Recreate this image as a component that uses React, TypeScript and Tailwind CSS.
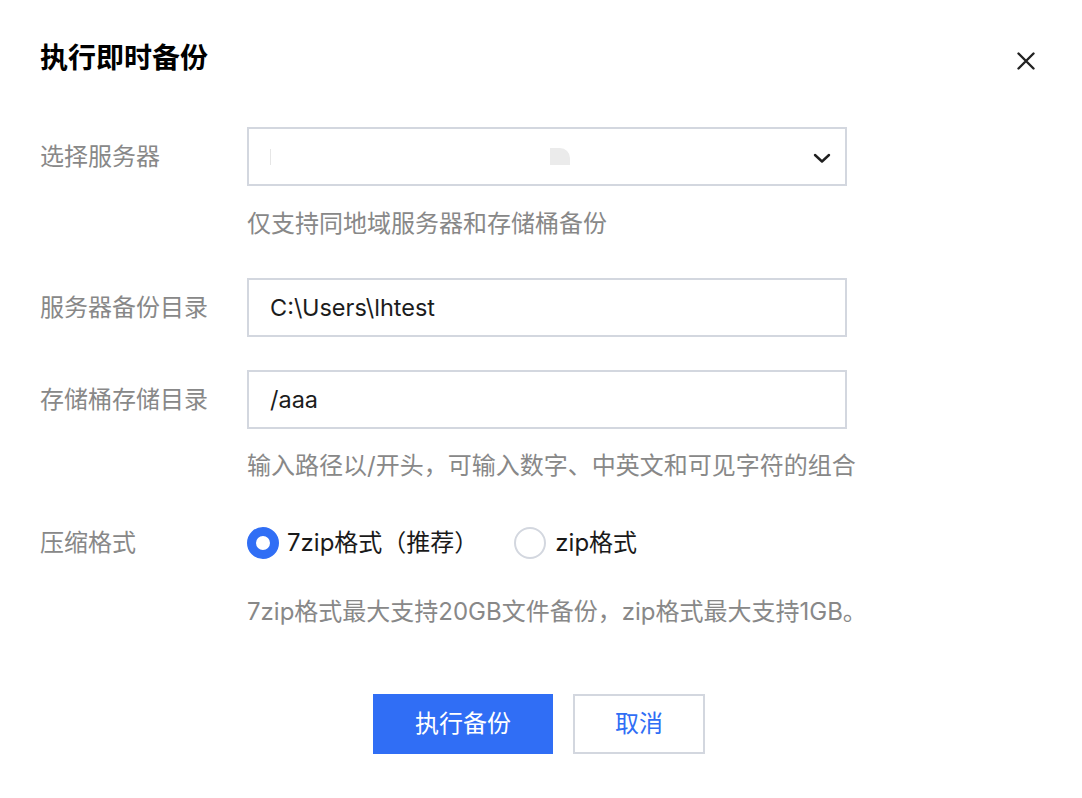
import React, { useState } from 'react';

const FONT = "font-['Inter','Noto_Sans_CJK_SC',sans-serif]";

function Field({ label, children }: { label: string; children: React.ReactNode }) {
  return (
    <div className="flex items-center">
      <div className="w-[207px] shrink-0 text-[24px] leading-[32px] text-[#888888]">{label}</div>
      <div className="w-[600px]">{children}</div>
    </div>
  );
}

function Hint({ children, className = '' }: { children: React.ReactNode; className?: string }) {
  return (
    <div className={`pl-[207px] text-[24px] leading-[32px] text-[#888888] ${className}`}>{children}</div>
  );
}

export default function App() {
  const [format, setFormat] = useState<'7zip' | 'zip'>('7zip');

  return (
    <div className={`w-[1082px] h-[798px] bg-white ${FONT}`}>
      {/* Header */}
      <div className="flex items-center justify-between pl-[40px] pr-[46px] pt-[39px] h-[77px]">
        <h2 className="text-[28px] leading-[38px] font-bold text-black">执行即时备份</h2>
        <button className="w-[20px] h-[20px] flex items-center justify-center mt-[6px] text-[#222]">
          <svg width="18" height="18" viewBox="0 0 18 18" fill="none">
            <path d="M1.5 1.5L16.5 16.5M16.5 1.5L1.5 16.5" stroke="currentColor" strokeWidth="2.4" strokeLinecap="round" />
          </svg>
        </button>
      </div>

      {/* Form */}
      <div className="pl-[40px] pt-[50px]">
        <Field label="选择服务器">
          <div className="h-[59px] border-2 border-[#d3d7df] flex items-center justify-between pl-[21px] pr-[14px]">
            <div className="flex items-center">
              <span className="w-px h-[16px] bg-[#e6e6e6]" />
              <span className="ml-[279px] w-[20px] h-[17px] bg-[#ebebeb] rounded-tr-[10px]" />
            </div>
            <svg width="18" height="12" viewBox="0 0 18 12" fill="none" className="mt-[2px]">
              <path d="M2 3L9 9.5L16 3" stroke="#1f1f1f" strokeWidth="2.4" strokeLinecap="round" strokeLinejoin="round" />
            </svg>
          </div>
        </Field>
        <Hint className="mt-[22px]">仅支持同地域服务器和存储桶备份</Hint>

        <div className="mt-[38px]">
          <Field label="服务器备份目录">
            <div className="h-[59px] border-2 border-[#d3d7df] flex items-center pl-[21px] text-[23.5px] text-[#1c1c1c]">
              C:\Users\lhtest
            </div>
          </Field>
        </div>

        <div className="mt-[33px]">
          <Field label="存储桶存储目录">
            <div className="h-[59px] border-2 border-[#d3d7df] flex items-center pl-[21px] text-[23.5px] text-[#1c1c1c]">
              /aaa
            </div>
          </Field>
        </div>
        <Hint className="mt-[21px]">输入路径以/开头，可输入数字、中英文和可见字符的组合</Hint>

        <div className="mt-[45px]">
          <Field label="压缩格式">
            <div className="flex items-center h-[32px] text-[24px] text-[#1a1a1a]">
              <label className="flex items-center cursor-pointer" onClick={() => setFormat('7zip')}>
                <span
                  className={`w-[32px] h-[32px] rounded-full box-border ${
                    format === '7zip' ? 'border-[9px] border-[#306ef5] bg-white' : 'border-2 border-[#d3d7df]'
                  }`}
                />
                <span className="ml-[8px]">7zip格式（推荐）</span>
              </label>
              <label className="flex items-center cursor-pointer ml-[36px]" onClick={() => setFormat('zip')}>
                <span
                  className={`w-[32px] h-[32px] rounded-full box-border ${
                    format === 'zip' ? 'border-[9px] border-[#306ef5] bg-white' : 'border-2 border-[#d3d7df]'
                  }`}
                />
                <span className="ml-[9px]">zip格式</span>
              </label>
            </div>
          </Field>
        </div>
        <Hint className="mt-[37px]">7zip格式最大支持20GB文件备份，zip格式最大支持1GB。</Hint>
      </div>

      {/* Footer */}
      <div className="flex justify-center gap-[20px] mt-[66px] pr-[4px]">
        <button className="w-[180px] h-[60px] bg-[#306ef5] text-white text-[24px]">执行备份</button>
        <button className="w-[132px] h-[60px] border-2 border-[#d3d7df] bg-white text-[#306ef5] text-[24px]">取消</button>
      </div>
    </div>
  );
}
